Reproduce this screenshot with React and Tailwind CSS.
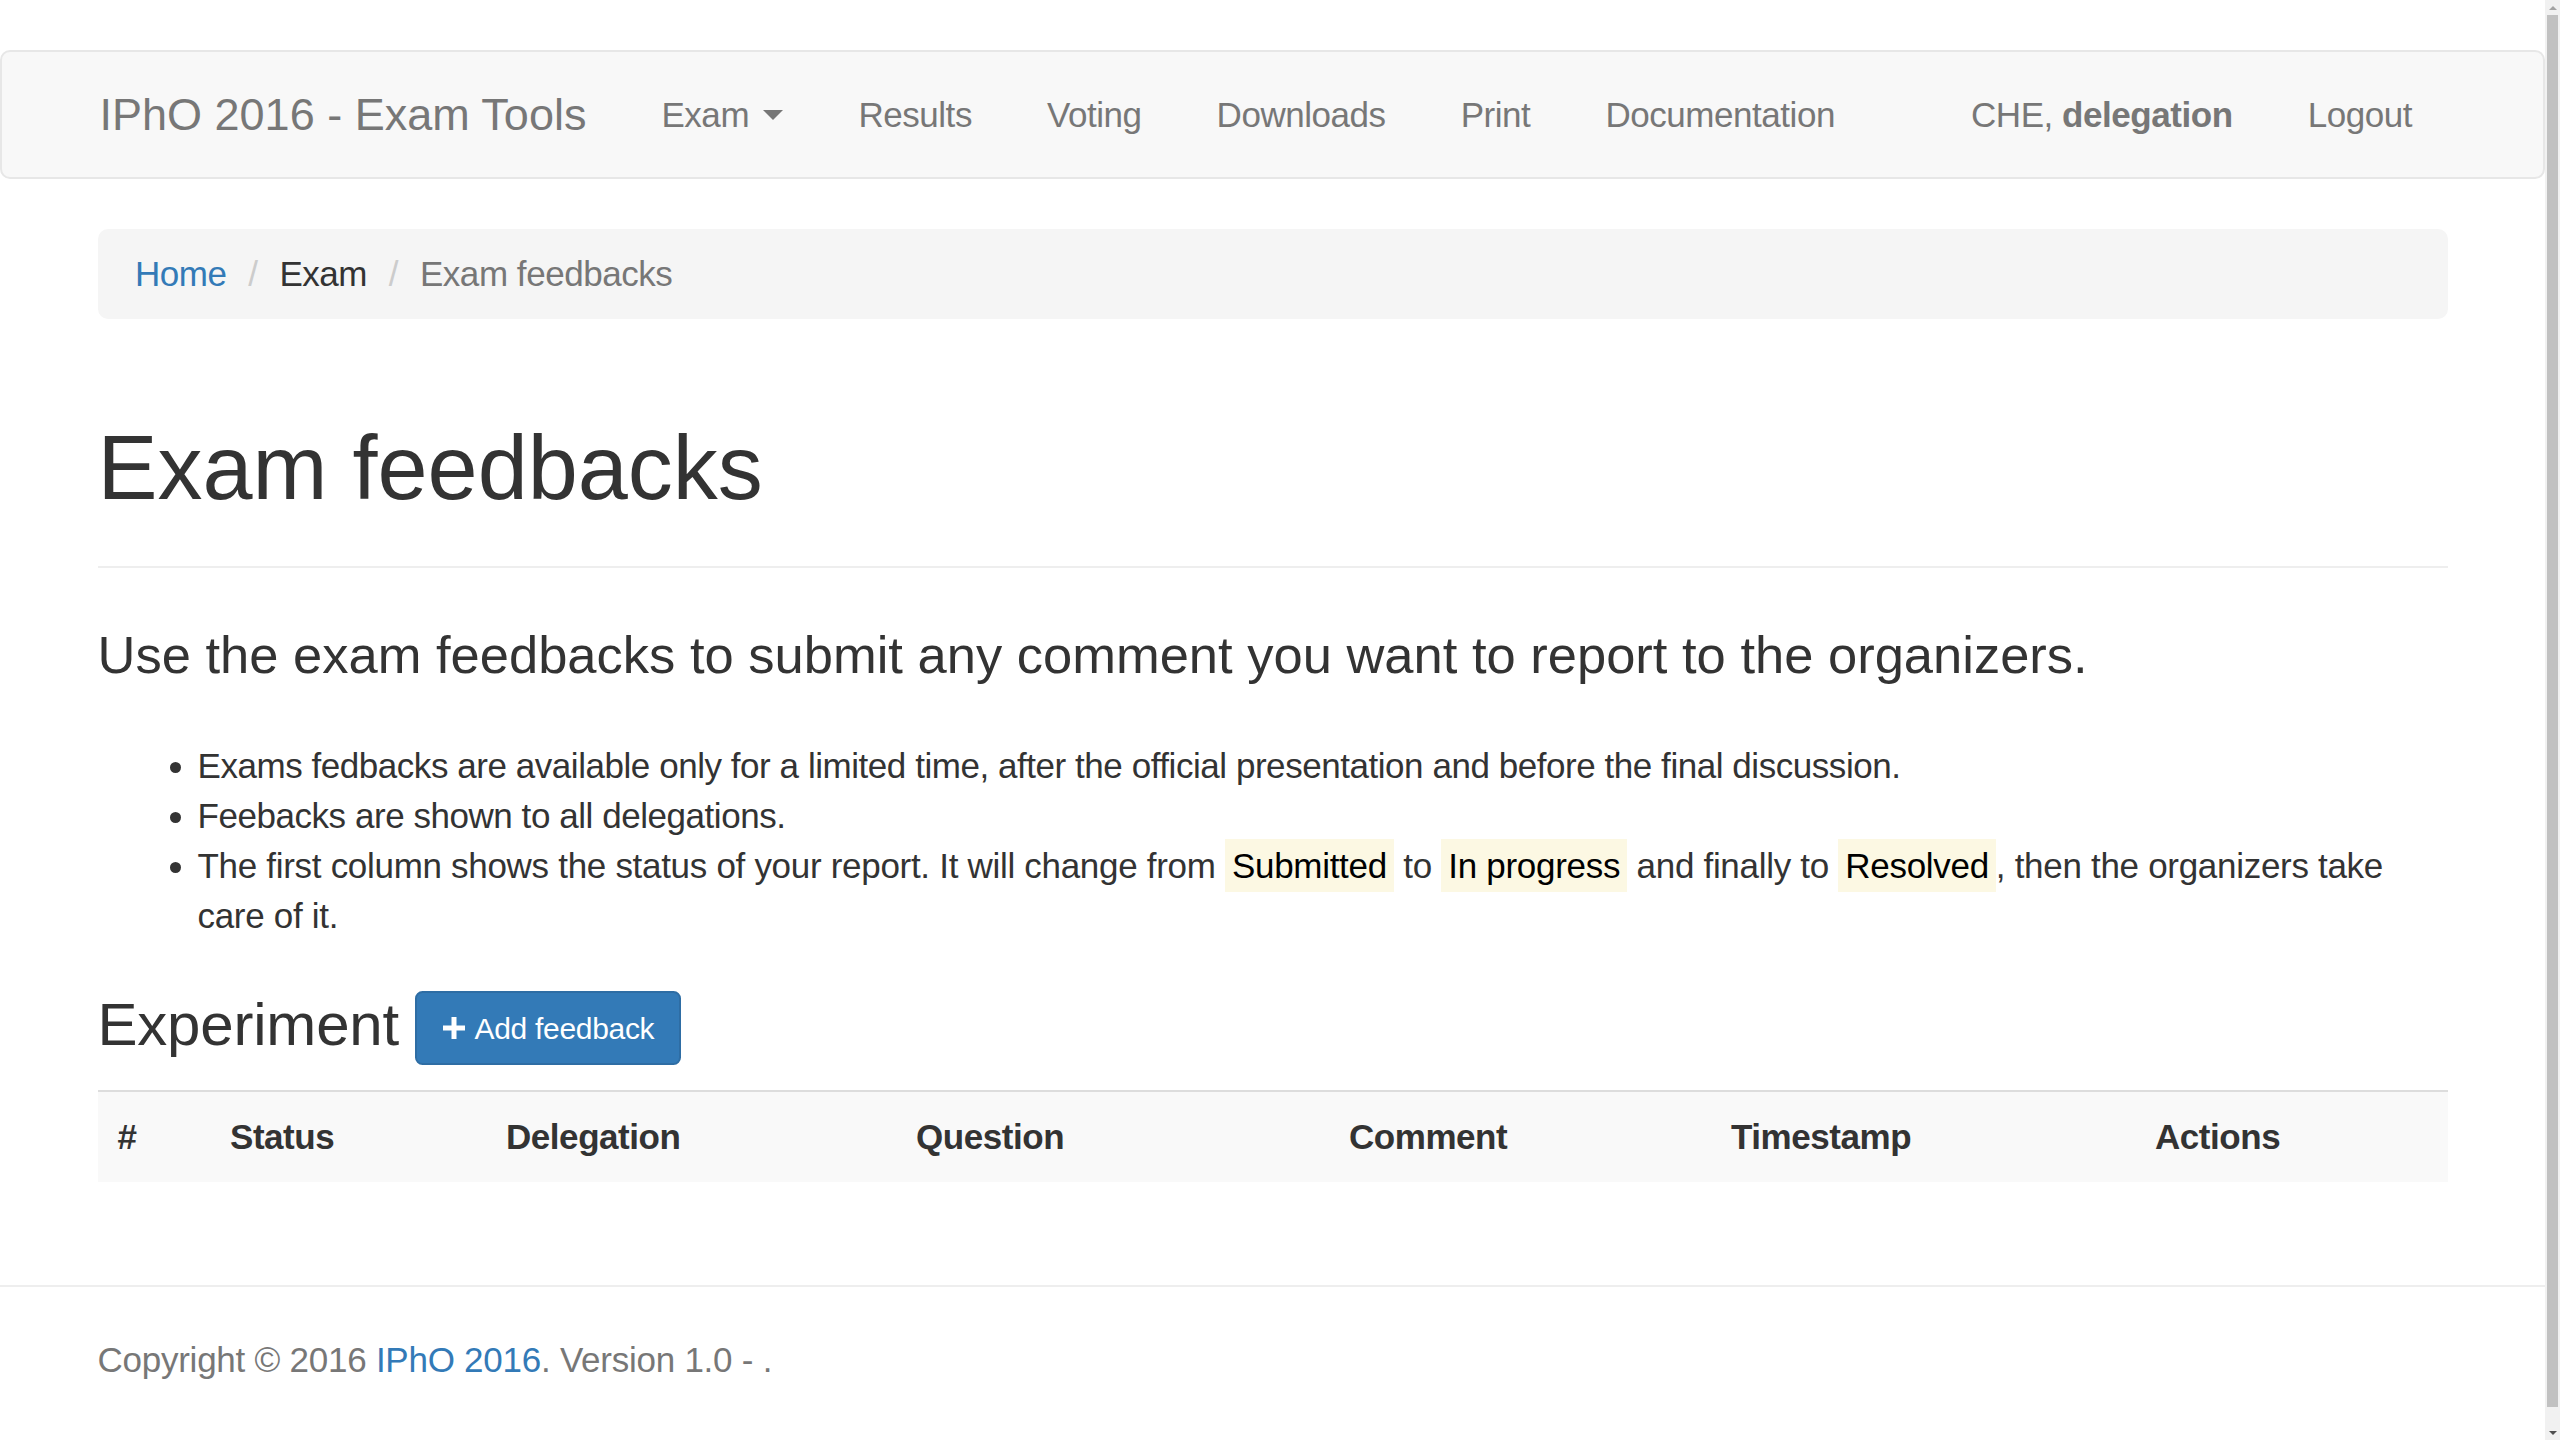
const navLinks = ["Results", "Voting", "Downloads", "Print", "Documentation"];

const columns = [
  { label: "#", width: "w-[112.5px]" },
  { label: "Status", width: "w-[276px]" },
  { label: "Delegation", width: "w-[410px]" },
  { label: "Question", width: "w-[433px]" },
  { label: "Comment", width: "w-[382px]" },
  { label: "Timestamp", width: "w-[424px]" },
  { label: "Actions", width: "w-[312.5px]" },
];

function Mark({ children }) {
  return <mark className="bg-[#fcf8e3] text-black px-[0.2em] py-[0.2em]">{children}</mark>;
}

function Sep() {
  return <span className="px-[12.5px] text-[#ccc]">/{"\u00a0"}</span>;
}

// imitation of the browser's vertical scrollbar
function Scrollbar() {
  return (
    <div className="fixed top-0 right-0 w-[15px] h-screen bg-[#f1f1f1] flex flex-col items-center">
      <div className="h-[15px] flex items-center justify-center">
        <span className="w-0 h-0 border-b-[4px] border-b-[#a3a3a3] border-x-[4px] border-x-transparent" />
      </div>
      <div className="w-[11px] h-[1392px] bg-[#c1c1c1]" />
      <div className="flex-1" />
      <div className="h-[15px] flex items-center justify-center">
        <span className="w-0 h-0 border-t-[4px] border-t-[#505050] border-x-[4px] border-x-transparent" />
      </div>
    </div>
  );
}

export default function App() {
  return (
    <div className="w-[2545px] font-['Liberation_Sans',Arial,sans-serif] text-[#333] text-[35px] leading-[50px] tracking-[-0.45px] bg-white">
      <div className="pt-[50px]">
        <nav className="bg-[#f8f8f8] border-2 border-[#e7e7e7] rounded-[10px]">
          <div className="ml-[60px] w-[2425px] px-[37.5px] flex h-[125px] text-[#777]">
            <a className="-ml-[37.5px] px-[37.5px] flex items-center text-[45px] leading-[50px] tracking-normal">
              IPhO 2016 - Exam Tools
            </a>
            <ul className="flex">
              <li>
                <a className="flex items-center h-full px-[37.5px]">
                  Exam{"\u00a0"}
                  <span className="ml-[5px] w-0 h-0 border-t-[10px] border-t-[#777] border-x-[10px] border-x-transparent" />
                </a>
              </li>
              {navLinks.map((label) => (
                <li key={label}>
                  <a className="flex items-center h-full px-[37.5px]">{label}</a>
                </li>
              ))}
            </ul>
            <ul className="flex ml-auto">
              <li>
                <a className="flex items-center h-full px-[37.5px] whitespace-pre">
                  CHE, <b className="font-bold">delegation</b>
                </a>
              </li>
              <li>
                <a className="flex items-center h-full px-[37.5px]">Logout</a>
              </li>
            </ul>
          </div>
        </nav>
      </div>

      <main className="ml-[60px] w-[2425px] px-[37.5px]">
        <div className="mt-[50px] bg-[#f5f5f5] rounded-[10px] px-[37.5px] py-[20px] leading-[50px]">
          <span className="text-[#337ab7]">Home</span> <Sep />
          <span>Exam</span> <Sep />
          <span className="text-[#777]">Exam feedbacks</span>
        </div>

        <div className="mt-[100px] pb-[22.5px] border-b-2 border-[#eee]">
          <h1 className="text-[90px] leading-[99px] mb-[25px] tracking-normal">Exam feedbacks</h1>
        </div>

        <p className="mt-[50px] text-[52.5px] leading-[73.5px] font-light mb-[50px] tracking-normal">
          Use the exam feedbacks to submit any comment you want to report to the organizers.
        </p>

        <ul className="list-disc pl-[100px] mb-[25px]">
          <li>Exams fedbacks are available only for a limited time, after the official presentation and before the final discussion.</li>
          <li>Feebacks are shown to all delegations.</li>
          <li className="tracking-[-0.3px]">
            The first column shows the status of your report. It will change from <Mark>Submitted</Mark> to{" "}
            <Mark>In progress</Mark> and finally to <Mark>Resolved</Mark>, then the organizers take care of it.
          </li>
        </ul>

        <h3 className="mt-[50px] mb-[25px] text-[60px] leading-[66px] tracking-[-0.2px]">
          Experiment{" "}
          <button className="inline-block align-[6px] bg-[#337ab7] border-[2.5px] border-[#2e6da4] rounded-[7.5px] text-white text-[30px] leading-[45px] tracking-[-0.3px] px-[25px] py-[12.5px]">
            <svg viewBox="0 0 24 24" className="inline-block w-[24px] h-[24px] mr-[8px] -mt-[6px] align-middle" fill="white">
              <path d="M9.5 1h5v8.5H23v5h-8.5V23h-5v-8.5H1v-5h8.5z" />
            </svg>
            Add feedback
          </button>
        </h3>

        <div className="flex border-t-2 border-[#ddd] bg-[#f9f9f9] font-bold">
          {columns.map((c) => (
            <div key={c.label} className={`${c.width} px-[20px] py-[20px] leading-[50px]`}>
              {c.label}
            </div>
          ))}
        </div>
      </main>

      <footer className="mt-[103px] border-t-2 border-[#eee] pt-[48px] pb-[40px] text-[#777] tracking-[-0.25px]">
        <div className="ml-[60px] w-[2425px] px-[37.5px]">
          Copyright © 2016 <span className="text-[#337ab7]">IPhO 2016</span>. Version 1.0 - .
        </div>
      </footer>

      <Scrollbar />
    </div>
  );
}
